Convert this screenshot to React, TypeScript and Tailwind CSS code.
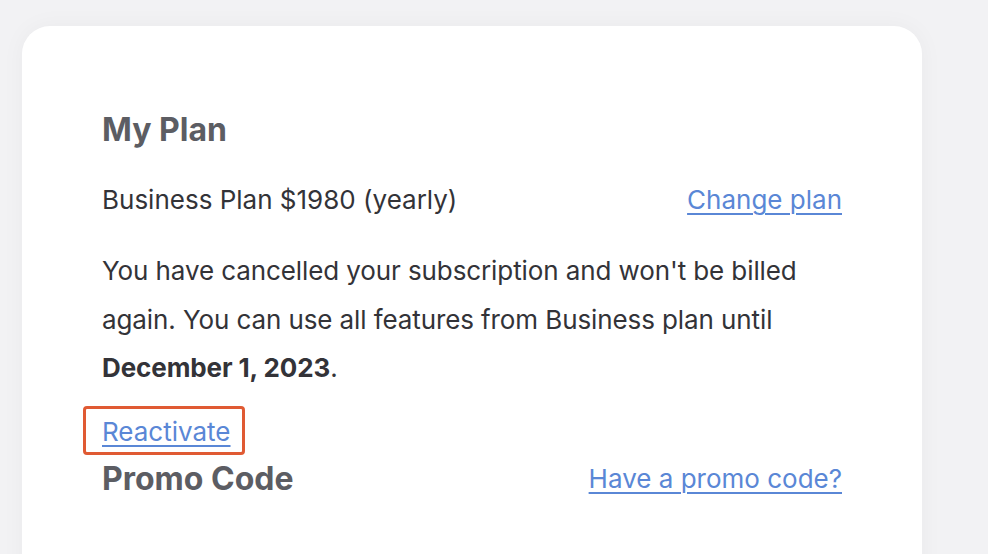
export default function App() {
  return (
    <div className="min-h-[554px] h-[554px] overflow-hidden bg-[#f2f2f4] pl-[22px] pt-[26px] w-[988px]" style={{ fontFamily: 'Inter, "Noto Sans", sans-serif' }}>
      <div className="w-[900px] h-[600px] bg-white rounded-[28px] shadow-[0_0_24px_rgba(0,0,0,0.04)] px-[80px] pt-[84px]">
        <h2 className="text-[32px] leading-[40px] font-bold text-[#5c5d63]">My Plan</h2>
        <div className="mt-[34px] flex justify-between items-center text-[26px] leading-[32px] text-[#333338]">
          <span>Business Plan $1980 (yearly)</span>
          <a href="#" className="text-[#5a87d6] underline underline-offset-[4px] decoration-[1.5px]">Change plan</a>
        </div>
        <p className="mt-[31px] text-[26px] leading-[48.5px] tracking-[-0.1px] text-[#333338]">
          You have cancelled your subscription and won't be billed again. You can use all features from Business plan until <b className="font-bold">December 1, 2023</b>.
        </p>
        <div className="mt-[13px] -ml-[19px] w-[162px] h-[49px] border-[3px] border-[#e05a33] rounded-[4px] pl-[16px] pt-[3px] flex items-center">
          <a href="#" className="text-[26px] leading-[32px] text-[#5a87d6] underline underline-offset-[4px] decoration-[1.5px]">Reactivate</a>
        </div>
        <div className="mt-[4px] flex justify-between items-center">
          <h2 className="text-[32px] leading-[40px] font-bold text-[#5c5d63]">Promo Code</h2>
          <a href="#" className="text-[26px] leading-[32px] text-[#5a87d6] underline underline-offset-[4px] decoration-[1.5px]">Have a promo code?</a>
        </div>
      </div>
    </div>
  );
}
